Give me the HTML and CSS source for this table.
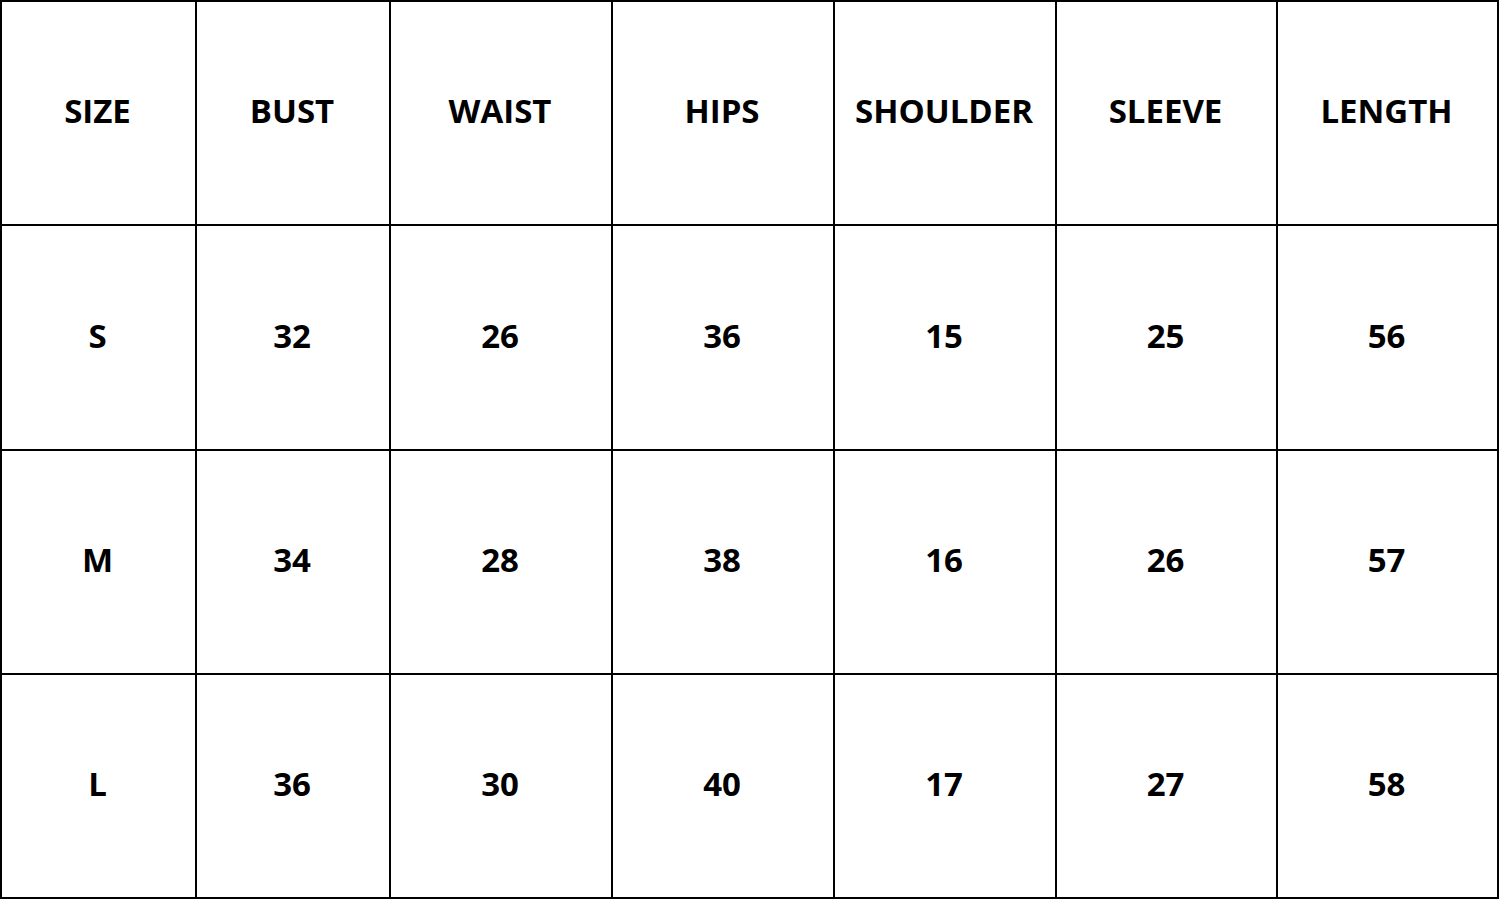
FILE: index.html
```html
<!DOCTYPE html>
<html>
<head>
<meta charset="utf-8">
<link rel="stylesheet" href="styles.css">
</head>
<body>
<div class="chart">
  <div class="cell head">SIZE</div>
  <div class="cell head">BUST</div>
  <div class="cell head">WAIST</div>
  <div class="cell head">HIPS</div>
  <div class="cell head">SHOULDER</div>
  <div class="cell head">SLEEVE</div>
  <div class="cell head">LENGTH</div>

  <div class="cell">S</div>
  <div class="cell">32</div>
  <div class="cell">26</div>
  <div class="cell">36</div>
  <div class="cell">15</div>
  <div class="cell">25</div>
  <div class="cell">56</div>

  <div class="cell">M</div>
  <div class="cell">34</div>
  <div class="cell">28</div>
  <div class="cell">38</div>
  <div class="cell">16</div>
  <div class="cell">26</div>
  <div class="cell">57</div>

  <div class="cell">L</div>
  <div class="cell">36</div>
  <div class="cell">30</div>
  <div class="cell">40</div>
  <div class="cell">17</div>
  <div class="cell">27</div>
  <div class="cell">58</div>
</div>
</body>
</html>
```
FILE: styles.css
```css
html, body {
  margin: 0;
  padding: 0;
  background: #ffffff;
}
.chart {
  display: grid;
  grid-template-columns: 195px 194px 222px 222px 222px 221px 221px;
  grid-template-rows: 224px 225px 224px 224px;
  width: 1499px;
  box-sizing: border-box;
  border-left: 2px solid #000;
  border-top: 2px solid #000;
  font-family: "Open Sans", "Liberation Sans", sans-serif;
  font-weight: 700;
  font-size: 33px;
  line-height: 1;
  color: #000;
}
.cell {
  box-sizing: border-box;
  border-right: 2px solid #000;
  border-bottom: 2px solid #000;
  display: flex;
  align-items: center;
  justify-content: center;
  padding-bottom: 5px;
  padding-right: 2px;
}
```
